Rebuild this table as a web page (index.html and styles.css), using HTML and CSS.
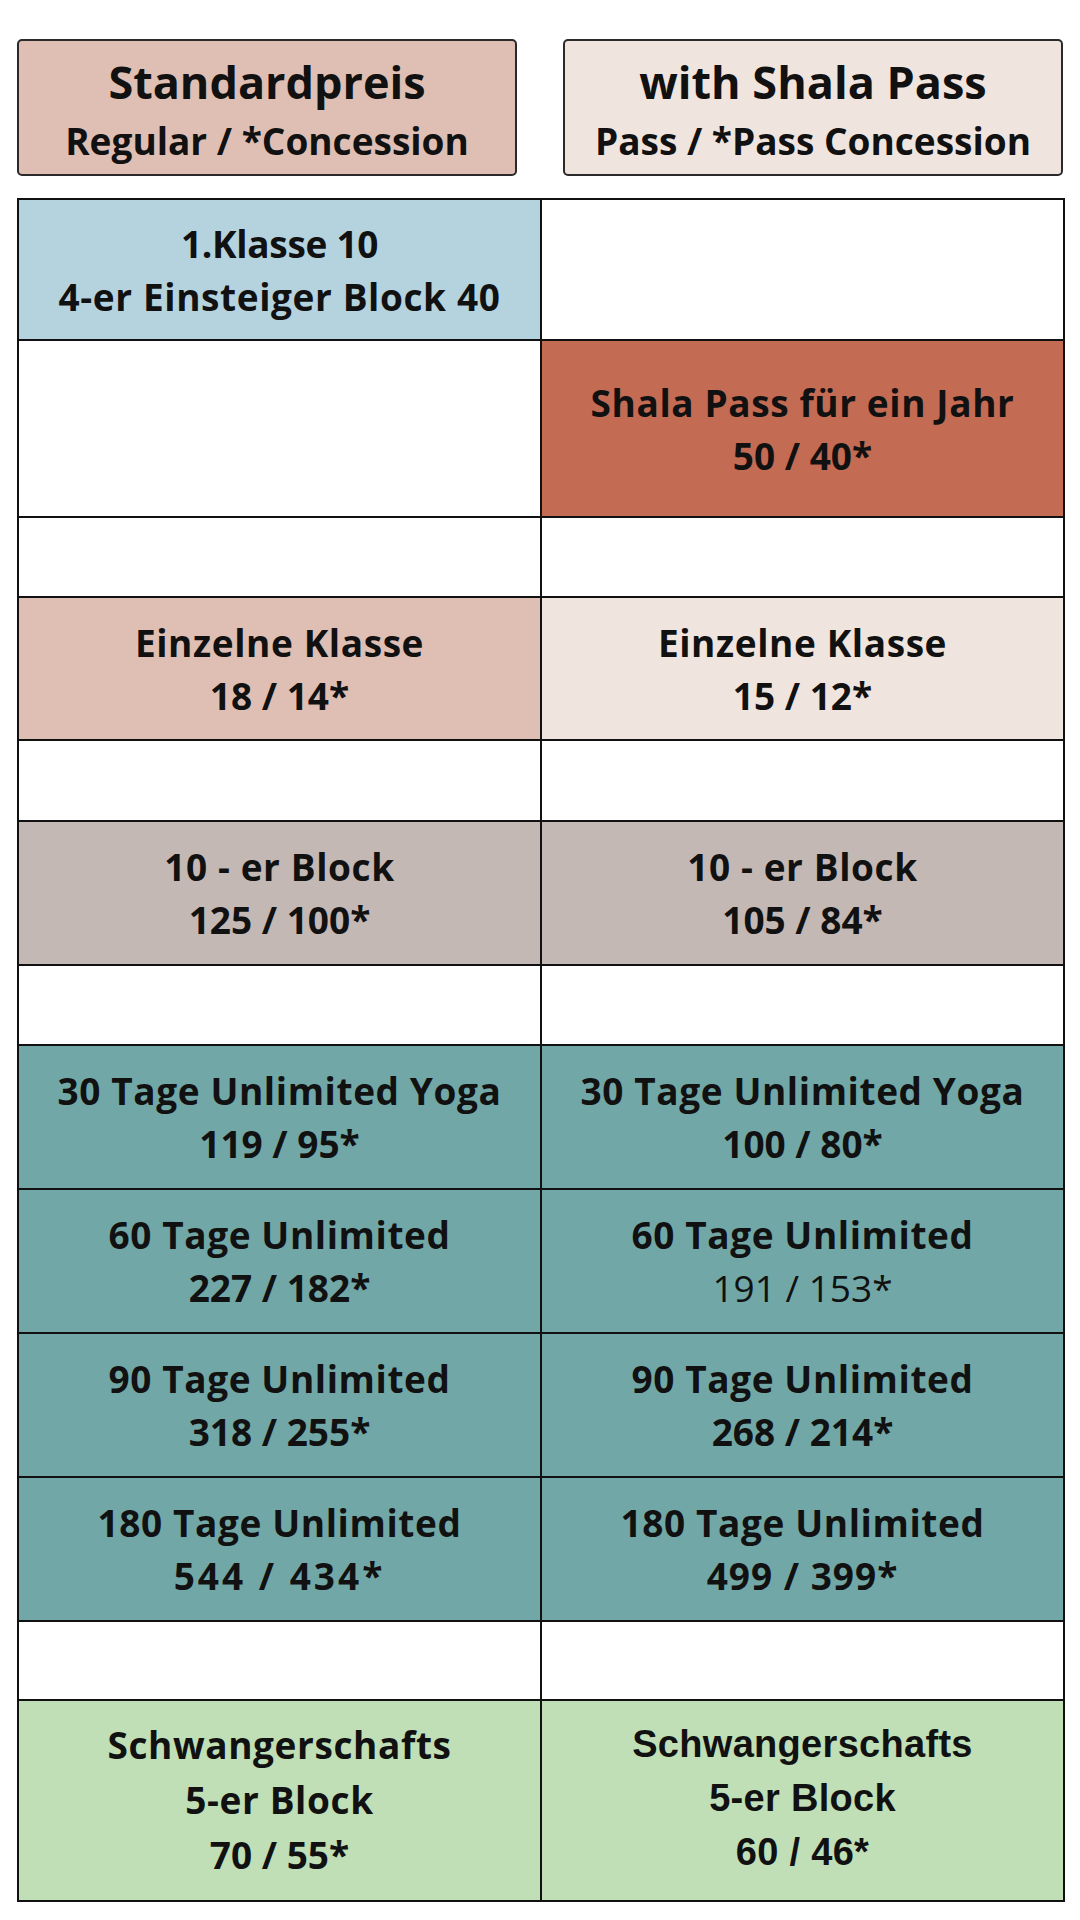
FILE: index.html
```html
<!DOCTYPE html>
<html lang="de">
<head>
<meta charset="utf-8">
<title>Preise</title>
<link rel="stylesheet" href="styles.css">
</head>
<body>
<div class="page">
  <div class="heads">
    <div class="head head-std">
      <div class="head-title">Standardpreis</div>
      <div class="head-sub">Regular / *Concession</div>
    </div>
    <div class="head head-pass">
      <div class="head-title">with Shala Pass</div>
      <div class="head-sub">Pass / *Pass Concession</div>
    </div>
  </div>

  <div class="table">
    <div class="row r1">
      <div class="cell blue"><span class="klasse">1.Klasse 10</span><span class="txt">4-er Einsteiger Block 40</span></div>
      <div class="cell"></div>
    </div>
    <div class="row r2">
      <div class="cell"></div>
      <div class="cell terra"><span class="txt">Shala Pass für ein Jahr</span><span>50 / 40*</span></div>
    </div>
    <div class="row r3">
      <div class="cell"></div>
      <div class="cell"></div>
    </div>
    <div class="row r4">
      <div class="cell rose"><span class="txt">Einzelne Klasse</span><span>18 / 14*</span></div>
      <div class="cell blush"><span class="txt">Einzelne Klasse</span><span>15 / 12*</span></div>
    </div>
    <div class="row r5">
      <div class="cell"></div>
      <div class="cell"></div>
    </div>
    <div class="row r6">
      <div class="cell taupe"><span class="txt">10 - er Block</span><span>125 / 100*</span></div>
      <div class="cell taupe"><span class="txt">10 - er Block</span><span>105 / 84*</span></div>
    </div>
    <div class="row r7">
      <div class="cell"></div>
      <div class="cell"></div>
    </div>
    <div class="row r8">
      <div class="cell teal"><span class="txt">30 Tage Unlimited Yoga</span><span>119 / 95*</span></div>
      <div class="cell teal"><span class="txt">30 Tage Unlimited Yoga</span><span>100 / 80*</span></div>
    </div>
    <div class="row r9">
      <div class="cell teal"><span class="txt">60 Tage Unlimited</span><span>227 / 182*</span></div>
      <div class="cell teal"><span class="txt">60 Tage Unlimited</span><span class="light">191 / 153*</span></div>
    </div>
    <div class="row r10">
      <div class="cell teal"><span class="txt">90 Tage Unlimited</span><span>318 / 255*</span></div>
      <div class="cell teal"><span class="txt">90 Tage Unlimited</span><span>268 / 214*</span></div>
    </div>
    <div class="row r11">
      <div class="cell teal"><span class="txt">180 Tage Unlimited</span><span class="wide">544 / 434*</span></div>
      <div class="cell teal"><span class="txt">180 Tage Unlimited</span><span class="semiwide">499 / 399*</span></div>
    </div>
    <div class="row r12">
      <div class="cell"></div>
      <div class="cell"></div>
    </div>
    <div class="row r13">
      <div class="cell green three"><span class="txt">Schwangerschafts</span><span class="txt">5-er Block</span><span>70 / 55*</span></div>
      <div class="cell green three arial"><span>Schwangerschafts</span><span>5-er Block</span><span>60 / 46*</span></div>
    </div>
  </div>
</div>
</body>
</html>
```

FILE: styles.css
```css
* { box-sizing: border-box; }

html, body {
  margin: 0;
  padding: 0;
  background: #ffffff;
}

body {
  width: 1080px;
  height: 1920px;
  font-family: "Open Sans", "Lato", sans-serif;
  font-weight: 700;
  color: #111111;
}

.page {
  padding: 39px 15px 0 17px;
}

.heads {
  display: flex;
  gap: 46px;
}

.head {
  width: 500px;
  height: 137px;
  border: 2px solid #2a2a2a;
  border-radius: 5px;
  display: flex;
  flex-direction: column;
  align-items: center;
  justify-content: center;
  gap: 4px;
  padding-top: 4px;
}

.head-std { background: #dfbfb4; }
.head-pass { background: #f0e4de; }

.head-title {
  font-size: 45px;
  line-height: 58px;
}

.head-sub {
  font-size: 37px;
  line-height: 52px;
}

.table {
  margin-top: 22px;
  width: 1048px;
  border-top: 2px solid #111;
  border-left: 2px solid #111;
  border-right: 2px solid #111;
}

.row {
  display: grid;
  grid-template-columns: 523px 1fr;
  border-bottom: 2px solid #111;
}

.r1 { height: 141px; }
.r2 { height: 177px; }
.r3 { height: 80px; }
.r4 { height: 143px; }
.r5 { height: 81px; }
.r6 { height: 144px; }
.r7 { height: 80px; }
.r8 { height: 144px; }
.r9 { height: 144px; }
.r10 { height: 144px; }
.r11 { height: 144px; }
.r12 { height: 79px; }
.r13 { height: 201px; }

.cell {
  display: flex;
  flex-direction: column;
  align-items: center;
  justify-content: center;
  text-align: center;
  font-size: 37px;
  line-height: 53px;
  background: #ffffff;
}

.cell:first-child {
  border-right: 2px solid #111;
}

.txt { letter-spacing: 0.6px; }
.klasse { letter-spacing: -0.3px; }

.blue { background: #b5d3df; }
.terra { background: #c46b54; }
.rose { background: #dfbfb4; }
.blush { background: #f0e4de; }
.taupe { background: #c4b8b5; }
.teal { background: #71a8a7; }
.green { background: #c0dfb6; }

.three { line-height: 55px; padding-bottom: 2px; }

.arial {
  font-family: "Liberation Sans", Arial, sans-serif;
  font-weight: 700;
  font-size: 38px;
  line-height: 54px;
  letter-spacing: 0.3px;
  padding-bottom: 6px;
}

.wide { letter-spacing: 3px; }
.semiwide { letter-spacing: 1px; }
.light { font-weight: 400; }
```
